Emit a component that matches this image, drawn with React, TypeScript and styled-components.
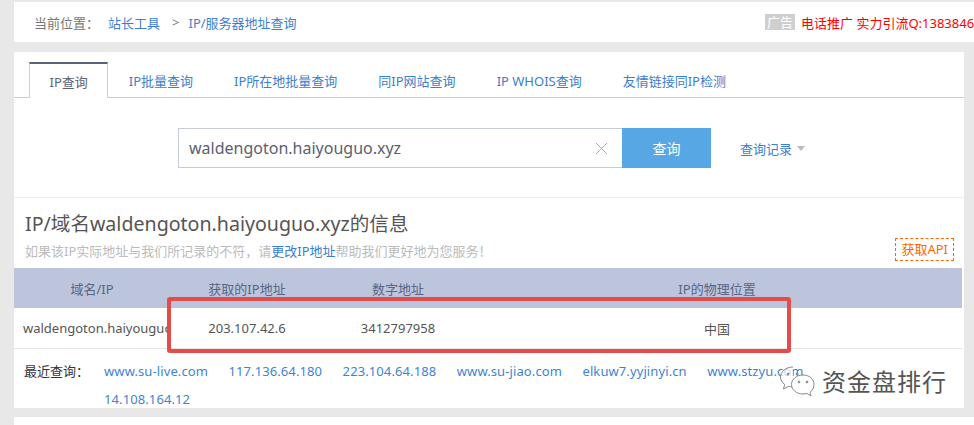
import styled, { createGlobalStyle } from 'styled-components';

const GlobalStyle = createGlobalStyle`
  html, body {
    margin: 0;
    padding: 0;
    background: #e8e8e8;
    overflow: hidden;
  }
  body {
    font-family: "Noto Sans", "Noto Sans CJK SC", sans-serif;
    color: #555;
  }
`;

const StyledPage = styled.div`
  position: relative;
  width: 974px;
  height: 425px;
  padding: 2px 0 0 14px;
  box-sizing: border-box;
  overflow: hidden;
`;

const StyledCrumbBar = styled.div`
  height: 40px;
  width: 1000px;
  background: #fff;
  display: flex;
  align-items: center;
  padding-left: 20px;
  font-size: 13px;
  white-space: nowrap;
`;

const StyledCrumbNav = styled.div`
  flex: 0 0 731px;
  display: flex;
  align-items: center;
  color: #777;
`;

const StyledCrumbLink = styled.a<{ $gap: number }>`
  color: #3d7fcf;
  text-decoration: none;
  margin-left: ${(p) => p.$gap}px;
`;

const StyledCrumbSep = styled.span`
  color: #777;
  margin-left: 12px;
`;

const StyledAdTag = styled.span`
  background: #cfcfcf;
  color: #fff;
  font-size: 13px;
  padding: 0 2px;
  line-height: 16px;
  margin-right: 6px;
`;

const StyledAdText = styled.span`
  color: #f00;
  font-size: 13px;
`;

const StyledPanel = styled.div`
  position: relative;
  margin-top: 10px;
  width: 950px;
  height: 356px;
  background: #fff;
  overflow: hidden;
`;

const StyledTabs = styled.div`
  display: flex;
  padding: 10px 15px 0;
  height: 35px;
  border-bottom: 1px solid #c8cde0;
`;

const StyledTab = styled.div<{ $active?: boolean }>`
  padding: 0 19.5px;
  display: flex;
  align-items: center;
  font-size: 13px;
  color: ${(p) => (p.$active ? '#5a6275' : '#3b80cc')};
  background: #fff;
  box-sizing: border-box;
  border: 1px solid ${(p) => (p.$active ? '#c8cde0' : 'transparent')};
  border-top: 2px solid ${(p) => (p.$active ? '#56627e' : 'transparent')};
  border-bottom: none;
  height: ${(p) => (p.$active ? '36px' : '35px')};
  white-space: nowrap;
`;

const StyledSearchArea = styled.div`
  display: flex;
  align-items: center;
  padding: 30px 0 29px 164px;
  border-bottom: 1px solid #eee;
`;

const StyledInputBox = styled.div`
  width: 444px;
  height: 40px;
  box-sizing: border-box;
  border: 1px solid #c5cbd9;
  border-right: none;
  display: flex;
  align-items: center;
  padding: 0 14px 0 10px;
  font-size: 16px;
  color: #5b6070;
`;

const StyledInputText = styled.span`
  flex: 1;
`;

const StyledSearchButton = styled.button`
  width: 89px;
  height: 40px;
  border: none;
  background: #56a7e3;
  color: #fff;
  font-family: inherit;
  font-size: 14px;
  padding: 0;
`;

const StyledHistory = styled.div`
  margin-left: 29px;
  color: #3b80cc;
  font-size: 13px;
  display: flex;
  align-items: center;
  gap: 5px;
`;

const StyledCaret = styled.span`
  width: 0;
  height: 0;
  border-left: 4px solid transparent;
  border-right: 4px solid transparent;
  border-top: 5px solid #bbb;
`;

const StyledInfoHead = styled.div`
  display: flex;
  align-items: flex-end;
  justify-content: space-between;
  padding: 12px 10px 6px 11px;
`;

const StyledTitle = styled.h2`
  margin: 0;
  font-size: 19.6px;
  font-weight: normal;
  color: #555;
  line-height: 28px;
`;

const StyledNote = styled.p`
  margin: 2px 0 0;
  font-size: 13px;
  color: #bbb;
  line-height: 22px;
`;

const StyledNoteLink = styled.a`
  color: #3b80cc;
  text-decoration: none;
`;

const StyledApiButton = styled.span`
  border: 1px dashed #f60;
  color: #f60;
  font-size: 13px;
  padding: 0 5px;
  line-height: 21px;
  margin-bottom: 1px;
`;

const StyledTable = styled.div`
  display: grid;
  grid-template-columns: 156px 154px 148px 490px;
  font-size: 13px;
`;

const StyledHeadCell = styled.div`
  height: 40px;
  background: #bcc5dc;
  color: #5b6683;
  display: flex;
  align-items: center;
  justify-content: center;
`;

const StyledCell = styled.div<{ $left?: boolean }>`
  height: 40px;
  border-bottom: 1px solid #e6e6e6;
  display: flex;
  align-items: center;
  justify-content: ${(p) => (p.$left ? 'flex-start' : 'center')};
  padding-left: ${(p) => (p.$left ? '9px' : '0')};
  overflow: hidden;
  white-space: nowrap;
  color: #555;
`;

const StyledRecent = styled.div`
  display: flex;
  padding: 8px 0 0 10px;
  font-size: 13px;
  line-height: 28px;
`;

const StyledRecentLabel = styled.span`
  flex: 0 0 80px;
  color: #333;
`;

const StyledRecentList = styled.div`
  width: 770px;
  display: flex;
  flex-wrap: wrap;
  column-gap: 20.5px;
`;

const StyledRecentLink = styled.a`
  color: #3d84d6;
  text-decoration: none;
  white-space: nowrap;
  letter-spacing: 0.1px;
`;

const StyledMark = styled.div`
  position: absolute;
  left: 0;
  top: 0;
  border: 4px solid #e64b4b;
  border-radius: 3px;
  box-sizing: border-box;
  width: 624px;
  height: 56px;
  transform: translate(153px, 245px);
  pointer-events: none;
`;

const StyledFooterPanel = styled.div`
  margin-top: 9px;
  height: 20px;
  background: #fff;
`;

const StyledWatermark = styled.div`
  position: absolute;
  left: 778px;
  top: 363px;
  display: flex;
  align-items: center;
  gap: 6px;
  font-family: "Noto Sans CJK SC", sans-serif;
  font-size: 24px;
  color: #555;
  text-shadow: 0 0 2px #fff, 1px 1px 0 #fff, -1px -1px 0 #fff;
  letter-spacing: 1px;
`;

const tabs = ['IP查询', 'IP批量查询', 'IP所在地批量查询', '同IP网站查询', 'IP WHOIS查询', '友情链接同IP检测'];

const recent = [
  'www.su-live.com',
  '117.136.64.180',
  '223.104.64.188',
  'www.su-jiao.com',
  'elkuw7.yyjinyi.cn',
  'www.stzyu.com',
  '14.108.164.12',
];

const WechatIcon = () => (
  <svg width="38" height="34" viewBox="0 0 38 34" fill="none" stroke="#888" strokeWidth="1">
    <path d="M15 3C8 3 2.5 7.5 2.5 13c0 3 1.6 5.6 4.2 7.4L5.5 25l5-2.6c1.4.4 2.9.6 4.5.6" fill="rgba(255,255,255,0.7)" />
    <circle cx="10" cy="10" r="1" fill="#888" />
    <circle cx="19" cy="10" r="1" fill="#888" />
    <path d="M25 11c-6.5 0-11.5 4.2-11.5 9.5S18.5 30 25 30c1.4 0 2.7-.2 3.9-.6L33 32l-1-3.6c2.4-1.8 4-4.3 4-7.9C36 15.2 31.5 11 25 11z" fill="rgba(255,255,255,0.8)" />
    <circle cx="21" cy="18" r="0.9" fill="#888" />
    <circle cx="29" cy="18" r="0.9" fill="#888" />
  </svg>
);

const App = () => {
  return (
    <StyledPage>
      <GlobalStyle />
      <StyledCrumbBar>
        <StyledCrumbNav>
          当前位置：
          <StyledCrumbLink $gap={9}>站长工具</StyledCrumbLink>
          <StyledCrumbSep>&gt;</StyledCrumbSep>
          <StyledCrumbLink $gap={9}>IP/服务器地址查询</StyledCrumbLink>
        </StyledCrumbNav>
        <StyledAdTag>广告</StyledAdTag>
        <StyledAdText>电话推广 实力引流Q:1383846599</StyledAdText>
      </StyledCrumbBar>

      <StyledPanel>
        <StyledTabs>
          {tabs.map((t, i) => (
            <StyledTab key={t} $active={i === 0}>
              {t}
            </StyledTab>
          ))}
        </StyledTabs>

        <StyledSearchArea>
          <StyledInputBox>
            <StyledInputText>waldengoton.haiyouguo.xyz</StyledInputText>
            <svg width="13" height="13" viewBox="0 0 13 13" stroke="#aaa" strokeWidth="1">
              <path d="M1 1l11 11M12 1L1 12" />
            </svg>
          </StyledInputBox>
          <StyledSearchButton>查询</StyledSearchButton>
          <StyledHistory>
            查询记录
            <StyledCaret />
          </StyledHistory>
        </StyledSearchArea>

        <StyledInfoHead>
          <div>
            <StyledTitle>IP/域名waldengoton.haiyouguo.xyz的信息</StyledTitle>
            <StyledNote>
              如果该IP实际地址与我们所记录的不符，请<StyledNoteLink>更改IP地址</StyledNoteLink>帮助我们更好地为您服务！
            </StyledNote>
          </div>
          <StyledApiButton>获取API</StyledApiButton>
        </StyledInfoHead>

        <StyledTable>
          <StyledHeadCell>域名/IP</StyledHeadCell>
          <StyledHeadCell>获取的IP地址</StyledHeadCell>
          <StyledHeadCell>数字地址</StyledHeadCell>
          <StyledHeadCell>IP的物理位置</StyledHeadCell>
          <StyledCell $left>waldengoton.haiyouguo.xyz</StyledCell>
          <StyledCell>203.107.42.6</StyledCell>
          <StyledCell>3412797958</StyledCell>
          <StyledCell>中国</StyledCell>
        </StyledTable>

        <StyledRecent>
          <StyledRecentLabel>最近查询：</StyledRecentLabel>
          <StyledRecentList>
            {recent.map((r) => (
              <StyledRecentLink key={r}>{r}</StyledRecentLink>
            ))}
          </StyledRecentList>
        </StyledRecent>

        <StyledMark />
      </StyledPanel>
      <StyledFooterPanel />

      <StyledWatermark>
        <WechatIcon />
        资金盘排行
      </StyledWatermark>
    </StyledPage>
  );
};

export default App;
